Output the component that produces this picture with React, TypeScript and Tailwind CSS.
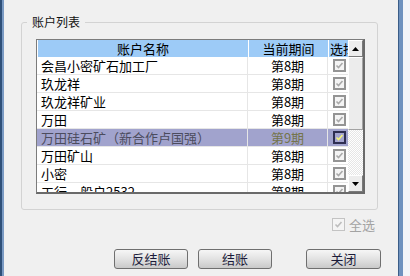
import React from "react";

const rows: { name: string; period: string; sel?: boolean }[] = [
  { name: "会昌小密矿石加工厂", period: "第8期" },
  { name: "玖龙祥", period: "第8期" },
  { name: "玖龙祥矿业", period: "第8期" },
  { name: "万田", period: "第8期" },
  { name: "万田硅石矿（新合作卢国强）", period: "第9期", sel: true },
  { name: "万田矿山", period: "第8期" },
  { name: "小密", period: "第8期" },
  { name: "工行一般户2532", period: "第8期" },
];

function Check({ sel }: { sel?: boolean }) {
  return (
    <div
      className={
        "w-[13px] h-[13px] border-2 flex items-center justify-center " +
        (sel ? "border-[#2e2e52] bg-[#a3a4cf]" : "border-[#949494] bg-[#f4f4f4]")
      }
    >
      <svg width="9" height="9" viewBox="0 0 9 9">
        <path
          d="M1.5 4.5 L3.5 6.5 L7.5 2"
          fill="none"
          stroke={sel ? "#f4f47a" : "#a9a9a9"}
          strokeWidth="1.6"
        />
      </svg>
    </div>
  );
}

function Btn({ label, w }: { label: string; w: string }) {
  return (
    <div
      className={
        w +
        " h-[20px] rounded-[3px] border border-[#6f6f6f] bg-gradient-to-b from-[#f6f6f6] via-[#e2e2e2] to-[#c9c9c9] flex items-center justify-center text-[#1c1c3a] text-[13px] leading-[18px]"
      }
    >
      {label}
    </div>
  );
}

export default function App() {
  return (
    <div className="w-[410px] h-[276px] bg-[#f0f0f0] flex overflow-hidden font-['Noto_Sans_CJK_SC',sans-serif] text-[13px] text-black">
      <div className="w-[2px] bg-[#2f5079]" />
      <div className="w-[2px] bg-[#7a9ac3]" />
      <div className="w-[394px] flex flex-col pt-[22px]">
        <div className="relative ml-[17px] w-[357px] h-[188px] border border-[#d3d3d3] rounded-[3px] pt-[16px] pl-[14px]">
          <div className="absolute -top-[8px] left-[5px] px-[5px] bg-[#f0f0f0] leading-[14px] text-[12px] text-[#111]">
            账户列表
          </div>
          <div className="w-[329px] h-[155px] border-t border-l border-[#7c7c7c] border-r-2 border-b-2 border-r-[#6a6a6a] border-b-[#6a6a6a] flex">
            <div className="w-[311px] flex flex-col overflow-hidden bg-white">
              <div className="h-[17px] flex bg-[#9dcbf7] leading-[17px] shrink-0">
                <div className="w-[211px] border-l border-white text-center">账户名称</div>
                <div className="w-[80px] border-l border-white text-center">当前期间</div>
                <div className="w-[20px] border-l border-white pl-[1px] overflow-hidden whitespace-nowrap">选择</div>
              </div>
              {rows.map((r, i) => (
                <div
                  key={i}
                  className={
                    "h-[18px] shrink-0 flex leading-[17px] border-b border-[#e6e6e6] " +
                    (r.sel ? "bg-[#a1a3cd]" : "bg-white")
                  }
                >
                  <div
                    className={
                      "w-[211px] pl-[4px] whitespace-nowrap overflow-hidden border-r border-[#e6e6e6] " +
                      (r.sel ? "text-[#4c4c5e]" : "")
                    }
                  >
                    {r.name}
                  </div>
                  <div
                    className={
                      "w-[80px] text-center border-r border-[#e6e6e6] " +
                      (r.sel ? "text-[#74744a]" : "")
                    }
                  >
                    {r.period}
                  </div>
                  <div className="w-[20px] flex items-center justify-center pl-[2px]">
                    <Check sel={r.sel} />
                  </div>
                </div>
              ))}
            </div>
            <div className="w-[15px] flex flex-col">
              <div className="h-[17px] shrink-0 bg-[#ededed] border-t border-l border-white border-r border-b border-r-[#7a7a7a] border-b-[#7a7a7a] flex items-center justify-center">
                <svg width="7" height="4" viewBox="0 0 7 4">
                  <path d="M0 4 L3.5 0 L7 4 Z" fill="#000" />
                </svg>
              </div>
              <div className="h-[73px] shrink-0 bg-[#ececec] border-t border-l border-white border-r border-b border-r-[#a3a3a3] border-b-[#a3a3a3]" />
              <div className="flex-1 bg-[conic-gradient(#e6e6e6_25%,#ffffff_0_50%,#e6e6e6_0_75%,#ffffff_0)] bg-[length:2px_2px]" />
              <div className="h-[17px] shrink-0 bg-[#ededed] border-t border-l border-white border-r border-b border-r-[#7a7a7a] border-b-[#7a7a7a] flex items-center justify-center">
                <svg width="7" height="4" viewBox="0 0 7 4">
                  <path d="M0 0 L7 0 L3.5 4 Z" fill="#000" />
                </svg>
              </div>
            </div>
          </div>
        </div>
        <div className="mt-[8px] h-[13px] flex items-center justify-end mr-[23px] gap-[4px]">
          <div className="w-[13px] h-[13px] border border-[#c3c3c3] bg-[#f4f4f4] flex items-center justify-center">
            <svg width="9" height="9" viewBox="0 0 9 9">
              <path d="M1.5 4.5 L3.5 6.5 L7.5 2" fill="none" stroke="#bdbdbd" strokeWidth="1.6" />
            </svg>
          </div>
          <span className="text-[#a3a3a3] leading-[13px]">全选</span>
        </div>
        <div className="mt-[18px] flex">
          <div className="ml-[110px]">
            <Btn label="反结账" w="w-[74px]" />
          </div>
          <div className="ml-[10px]">
            <Btn label="结账" w="w-[74px]" />
          </div>
          <div className="ml-[34px]">
            <Btn label="关闭" w="w-[75px]" />
          </div>
        </div>
      </div>
      <div className="w-[1px] bg-[#3b5d88]" />
      <div className="w-[4px] bg-[#6f92be]" />
      <div className="w-[7px] bg-[#f3f5f8]" />
    </div>
  );
}
